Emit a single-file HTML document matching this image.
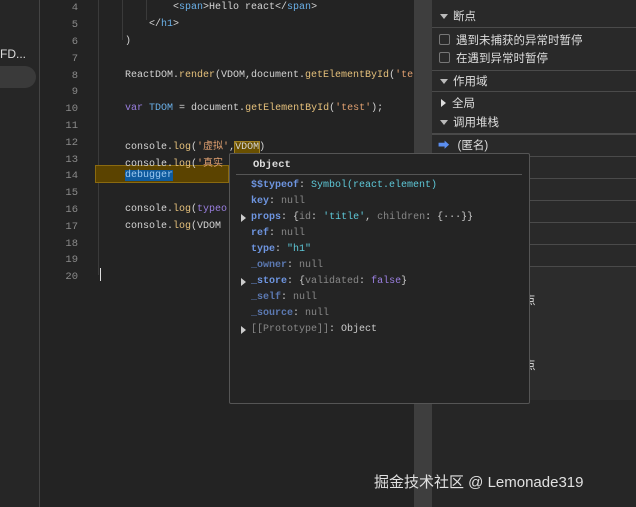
<!DOCTYPE html>
<html><head><meta charset="utf-8"><style>
*{margin:0;padding:0;box-sizing:border-box}
body{width:636px;height:507px;background:#232323;position:relative;overflow:hidden;font-family:"Liberation Mono","Noto Sans CJK SC",monospace;font-size:10px;color:#d0d0d0}
.a{position:absolute}
.ln{position:absolute;left:40px;width:38px;text-align:right;color:#8a8a8a;font-size:10.5px}
.cl{position:absolute;left:125px;white-space:pre;color:#d4d4d4;margin-top:2px}
.y{color:#e5c07b}.s{color:#e0a070}.v{color:#9a7fe0}.t{color:#6ab0e8}.c{color:#d4d4d4}
.rp{position:absolute;left:432px;width:204px;font-family:"Liberation Sans","Noto Sans CJK SC",sans-serif;font-size:11.5px;color:#ddd}
.sep{position:absolute;left:432px;width:204px;height:1px;background:#4a4a4a}
.tri{display:inline-block;width:0;height:0;border-left:4px solid transparent;border-right:4px solid transparent;border-top:5px solid #bbb;margin:0 5px 1px 8px}
.tr{display:inline-block;width:0;height:0;border-top:4px solid transparent;border-bottom:4px solid transparent;border-left:5px solid #ddd;margin:0 6px 0 9px}
.cb{display:inline-block;width:11px;height:11px;border:1px solid #777;border-radius:2px;background:#2a2a2a;margin:0 6px -1px 7px}
.p{position:absolute;left:251px;white-space:pre;color:#ccc}
.k{color:#6e95e0;font-weight:bold}.n{color:#888}.g{color:#5ec8d8}
.pt{position:absolute;left:241px;width:0;height:0;border-top:4px solid transparent;border-bottom:4px solid transparent;border-left:5px solid #ccc}
</style></head><body>
<div class="a" style="left:0;top:0;width:40px;height:507px;background:#262626;border-right:1px solid #444"></div>
<div class="a" style="left:0;top:47px;font-family:'Liberation Sans',sans-serif;font-size:12px;color:#ddd">FD...</div>
<div class="a" style="left:-10px;top:66px;width:46px;height:22px;border-radius:11px;background:#3a3a3a"></div>
<div class="a" style="left:98px;top:0;width:1px;height:275px;background:#3a3a3a"></div>
<div class="a" style="left:146px;top:0;width:1px;height:20px;background:#3a3a3a"></div>
<div class="a" style="left:122px;top:0;width:1px;height:40px;background:#3a3a3a"></div>
<div class="a" style="left:95px;top:165px;width:134px;height:18px;background:#5b4300;border:1px solid #8a6a10"></div>
<div class="ln" style="top:2px">4</div><div class="ln" style="top:19px">5</div><div class="ln" style="top:36px">6</div><div class="ln" style="top:53px">7</div><div class="ln" style="top:70px">8</div><div class="ln" style="top:86px">9</div><div class="ln" style="top:103px">10</div><div class="ln" style="top:120px">11</div><div class="ln" style="top:137px">12</div><div class="ln" style="top:154px">13</div><div class="ln" style="top:170px">14</div><div class="ln" style="top:187px">15</div><div class="ln" style="top:204px">16</div><div class="ln" style="top:221px">17</div><div class="ln" style="top:238px">18</div><div class="ln" style="top:254px">19</div><div class="ln" style="top:271px">20</div>
<div class="cl" style="top:0;left:173px">&lt;<span class="t">span</span>&gt;Hello react&lt;/<span class="t">span</span>&gt;</div>
<div class="cl" style="top:17px;left:149px">&lt;/<span class="t">h1</span>&gt;</div>
<div class="cl" style="top:34px">)</div>
<div class="cl" style="top:68px">ReactDOM.<span class="y">render</span>(VDOM,document.<span class="y">getElementById</span>(<span class="s">'te</span></div>
<div class="cl" style="top:101px"><span class="v">var</span> <span class="t">TDOM</span> = document.<span class="y">getElementById</span>(<span class="s">'test'</span>);</div>
<div class="cl" style="top:135px">console.<span class="y">log</span>(<span class="s">'虚拟'</span>,<span style="background:#6a5000;outline:1px solid #a08020">VDOM</span>)</div>
<div class="cl" style="top:152px">console.<span class="y">log</span>(<span class="s">'真实</span></div>
<div class="cl" style="top:168px"><span style="background:#0e5a9e;color:#9cc8f0">debugger</span></div>
<div class="cl" style="top:202px">console.<span class="y">log</span>(<span class="v">typeo</span></div>
<div class="cl" style="top:219px">console.<span class="y">log</span>(VDOM</div>
<div class="a" style="left:100px;top:268px;width:1px;height:13px;background:#ddd"></div>
<div class="a" style="left:414px;top:0;width:18px;height:507px;background:#3e3e3e"></div>
<div class="a" style="left:432px;top:0;width:204px;height:507px;background:#262626"></div>
<div class="a" style="left:432px;top:0;width:204px;height:266px;background:#292929"></div>
<div class="a" style="left:529px;top:266px;width:107px;height:134px;background:#2c2c2c"></div>
<div class="sep" style="top:27px"></div><div class="sep" style="top:70px"></div><div class="sep" style="top:91px"></div><div class="sep" style="top:133px;height:2px"></div>
<div class="sep" style="top:156px"></div><div class="sep" style="top:178px"></div><div class="sep" style="top:200px"></div><div class="sep" style="top:222px"></div><div class="sep" style="top:244px"></div><div class="sep" style="top:266px"></div>
<div class="rp" style="top:8px"><span class="tri"></span>断点</div>
<div class="rp" style="top:32px"><span class="cb"></span>遇到未捕获的异常时暂停</div>
<div class="rp" style="top:50px"><span class="cb"></span>在遇到异常时暂停</div>
<div class="rp" style="top:73px"><span class="tri"></span>作用域</div>
<div class="rp" style="top:95px"><span class="tr"></span>全局</div>
<div class="rp" style="top:114px"><span class="tri"></span>调用堆栈</div>
<div class="rp" style="top:137px"><span style="color:#5b8ef0;margin:0 8px 0 6px">➡</span>(匿名)</div>
<div class="rp" style="top:292px;left:524px">点</div>
<div class="rp" style="top:357px;left:524px">点</div>
<div class="a" style="left:229px;top:153px;width:301px;height:251px;background:#242424;border:1px solid #555;border-radius:2px"></div>
<div class="a" style="left:253px;top:159px;font-weight:bold;color:#ddd;font-size:10.5px">Object</div>
<div class="a" style="left:236px;top:174px;width:286px;height:1px;background:#555"></div>
<div class="p" style="top:180px"><span class="k">$$typeof</span>: <span class="g">Symbol(react.element)</span></div>
<div class="p" style="top:196px"><span class="k">key</span>: <span class="n">null</span></div>
<div class="pt" style="top:214px"></div><div class="p" style="top:212px"><span class="k">props</span>: {<span class="n">id</span>: <span class="g">'title'</span>, <span class="n">children</span>: {···}}</div>
<div class="p" style="top:228px"><span class="k">ref</span>: <span class="n">null</span></div>
<div class="p" style="top:244px"><span class="k">type</span>: <span class="g">"h1"</span></div>
<div class="p" style="top:260px"><span class="k" style="opacity:.75">_owner</span>: <span class="n">null</span></div>
<div class="pt" style="top:278px"></div><div class="p" style="top:276px"><span class="k">_store</span>: {<span class="n">validated</span>: <span class="v">false</span>}</div>
<div class="p" style="top:292px"><span class="k" style="opacity:.75">_self</span>: <span class="n">null</span></div>
<div class="p" style="top:308px"><span class="k" style="opacity:.75">_source</span>: <span class="n">null</span></div>
<div class="pt" style="top:326px"></div><div class="p" style="top:324px"><span class="n">[[Prototype]]</span>: Object</div>
<div class="a" style="left:374px;top:471px;font-family:'Liberation Sans','Noto Sans CJK SC',sans-serif;font-size:15px;color:#e0e0e0">掘金技术社区 @ Lemonade319</div>
</body></html>
